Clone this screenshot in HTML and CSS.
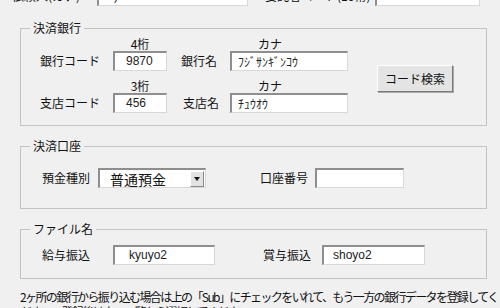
FILE: index.html
```html
<!DOCTYPE html>
<html lang="ja">
<head>
<meta charset="UTF-8">
<title>振込データ設定</title>
<link rel="stylesheet" href="styles.css">
</head>
<body>

<div class="form">
	<div class="top">
		<span class="lbl lbl_client">依頼人(カナ)</span>
		<span class="tb tb_client">ｶ)ﾄﾆﾊｲ</span>
		<span class="lbl lbl_code">委託者コード(10桁)</span>
		<span class="tb tb_code">0010345210</span>
	</div>

	<fieldset class="group group_bank">
		<legend>決済銀行</legend>
		<div class="bank">
			<span class="hint hint_num r1">4桁</span>
			<span class="hint hint_kana r1">カナ</span>
			<span class="lbl c1 r2">銀行コード</span>
			<span class="tb tb_num r2">9870</span>
			<span class="lbl lbl_name r2">銀行名</span>
			<span class="tb tb_kana r2">ﾌｼﾞｻﾝｷﾞﾝｺｳ</span>
			<button class="btn" type="button">コード検索</button>
			<span class="hint hint_num r3">3桁</span>
			<span class="hint hint_kana r3">カナ</span>
			<span class="lbl c1 r4">支店コード</span>
			<span class="tb tb_num r4">456</span>
			<span class="lbl lbl_name lbl_branch r4">支店名</span>
			<span class="tb tb_kana r4">ﾁｭｳｵｳ</span>
		</div>
	</fieldset>

	<fieldset class="group group_acct">
		<legend>決済口座</legend>
		<div class="line">
			<span class="lbl lbl_kind">預金種別</span>
			<span class="combo"><span class="combo_text">普通預金</span><span class="combo_btn"><i></i></span></span>
			<span class="lbl lbl_no">口座番号</span>
			<span class="tb tb_no"></span>
		</div>
	</fieldset>

	<fieldset class="group group_file">
		<legend>ファイル名</legend>
		<div class="line">
			<span class="lbl lbl_pay">給与振込</span>
			<span class="tb tb_pay">kyuyo2</span>
			<span class="lbl lbl_bonus">賞与振込</span>
			<span class="tb tb_bonus">shoyo2</span>
		</div>
	</fieldset>

	<p class="note">2ヶ所の銀行から振り込む場合は上の「Sub」にチェックをいれて、もう一方の銀行データを登録してください。登録後は上の一覧から選択してください。</p>
</div>

</body>
</html>
```

FILE: styles.css
```css
html,body{margin:0;padding:0;}
body{background:#f0f0f0;color:#111;font:12px/14px "Noto Sans CJK JP","Noto Sans",sans-serif;overflow:hidden;}
.form{width:500px;}

/* 先頭行（上が切れている） */
.top{display:flex;align-items:center;height:20px;margin-top:-14px;}
.lbl_client{margin-left:12px;width:85px;}
.tb_client{width:151px;}
.lbl_code{margin-left:17px;width:110px;}
.tb_code{width:105px;padding-left:12px;}

/* テキストボックス */
.tb{display:block;box-sizing:border-box;height:20px;background:#fff;border-top:2px solid #8e8e8e;border-left:2px solid #8e8e8e;border-right:1px solid #d8d8d8;border-bottom:1px solid #d8d8d8;padding-left:9px;line-height:17px;white-space:nowrap;overflow:hidden;font-family:"Liberation Sans","Noto Sans CJK JP",sans-serif;font-size:12px;color:#222;}

/* グループ枠 */
.group{box-sizing:border-box;width:467px;margin:0 0 0 20px;border:1px solid #c3c3c3;padding:0 0 0 9px;min-width:0;}
.group legend{padding:0 3px;line-height:14px;color:#111;}
.group_bank{margin-top:15px;padding-top:2px;padding-bottom:12px;}
.group_acct{margin-top:13px;padding-top:15px;padding-bottom:20px;}
.group_file{margin-top:13px;padding-top:9px;padding-bottom:13px;}

/* 決済銀行 */
.bank{display:grid;margin-left:10px;grid-template-columns:73px 54px 63px 118px 29px 76px;grid-template-rows:14px 20px 22px 20px;align-items:center;}
.r1{grid-row:1;}
.r2{grid-row:2;}
.r3{grid-row:3;}
.r4{grid-row:4;}
.c1{grid-column:1;}
.hint{align-self:end;}
.hint_num{grid-column:2;text-align:center;}
.hint_kana{grid-column:4;padding-left:28px;}
.tb_num{grid-column:2;padding-left:11px;}
.tb_kana{grid-column:4;padding-left:6px;font-family:"Noto Sans CJK JP",sans-serif;font-size:12px;}
.lbl_name{grid-column:3;padding-left:14px;}
.lbl_branch{padding-left:16px;}
.btn{grid-column:6;grid-row:2 / 5;align-self:start;margin-top:14px;height:27px;width:76px;padding:0;background:#e4e4e4;border:1px solid;border-color:#fff #7a7a7a #7a7a7a #fff;box-shadow:1px 1px 0 #a9a9a9;font:12px/14px "Noto Sans CJK JP",sans-serif;color:#111;}

/* 行レイアウト */
.line{display:flex;align-items:center;height:20px;}
.lbl_kind{margin-left:12px;width:56px;}
.combo{display:flex;align-items:center;box-sizing:border-box;width:108px;height:20px;background:#fff;border-top:2px solid #8e8e8e;border-left:2px solid #8e8e8e;border-right:1px solid #d8d8d8;border-bottom:1px solid #d8d8d8;}
.combo_text{flex:1;padding-left:10px;font-size:14px;line-height:16px;}
.combo_btn{display:flex;align-items:center;justify-content:center;box-sizing:border-box;width:14px;height:16px;margin-right:1px;background:#e2e2e2;border:1px solid;border-color:#fff #8a8a8a #8a8a8a #fff;}
.combo_btn i{width:0;height:0;border-left:3px solid transparent;border-right:3px solid transparent;border-top:4px solid #111;}
.lbl_no{margin-left:54px;width:55px;}
.tb_no{width:89px;}
.lbl_pay{margin-left:12px;width:71px;}
.tb_pay{width:102px;padding-left:14px;}
.lbl_bonus{margin-left:48px;width:59px;}
.tb_bonus{width:103px;}

.note{margin:10px 0 0 20px;width:480px;line-height:15px;letter-spacing:-1.6px;}
```
